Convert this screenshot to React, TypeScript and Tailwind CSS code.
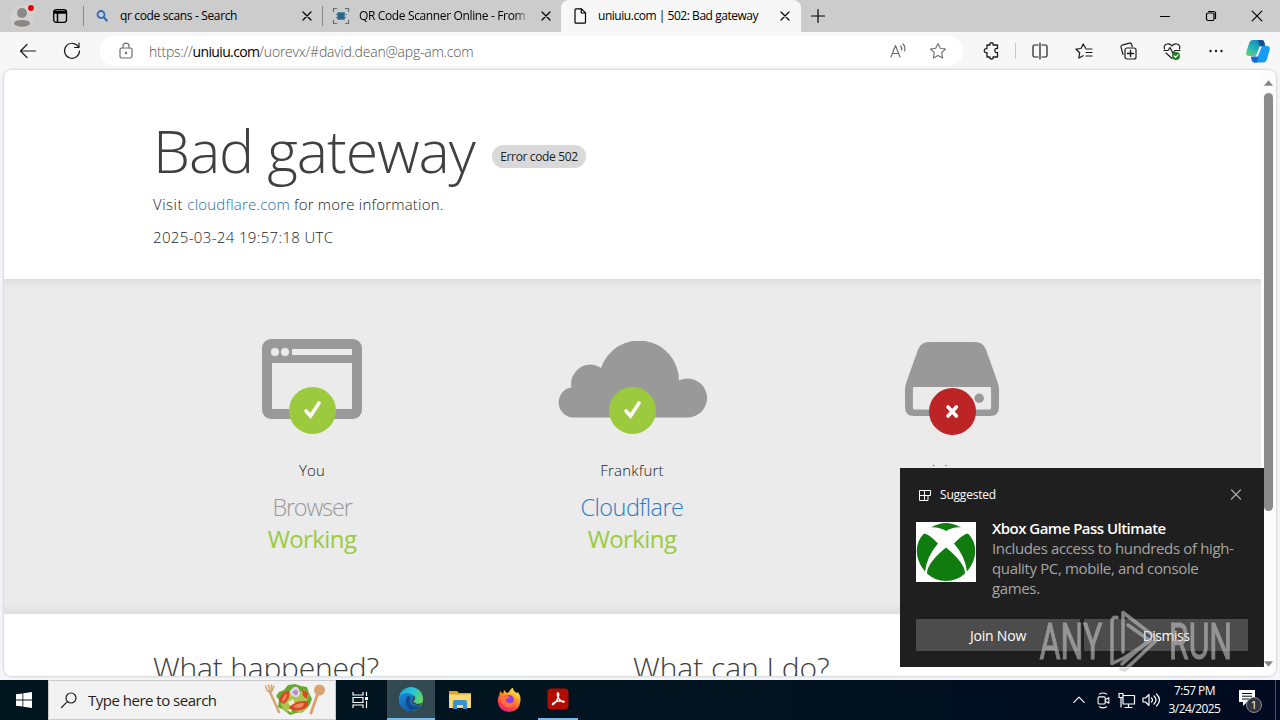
import type { ReactNode } from 'react'

type IconProps = { children: ReactNode; className?: string; size?: number }

function Icon({ children, className = '', size = 20 }: IconProps) {
  return (
    <svg width={size} height={size} viewBox="0 0 20 20" fill="none" stroke="currentColor" strokeWidth="1.2"
      strokeLinecap="round" strokeLinejoin="round" className={`shrink-0 ${className}`}>
      {children}
    </svg>
  )
}

function CloseIcon({ className = '' }: { className?: string }) {
  return <Icon className={className}><path d="M6 6l8 8M14 6l-8 8" strokeWidth="1.2" /></Icon>
}

function TabBar() {
  return (
    <div className="flex h-8 items-center bg-[#ccc] text-[12px] text-black">
      {/* profile */}
      <svg width="28" height="32" viewBox="0 0 28 32" className="ml-2 shrink-0">
        <circle cx="14" cy="17" r="12" fill="#d4d2d0" />
        <circle cx="14" cy="13" r="5" fill="#8b8987" />
        <path d="M6 23c0-4 16-4 16 0 0 5-16 5-16 0z" fill="#8b8987" />
        <circle cx="23" cy="8" r="4.5" fill="#dcd6d4" />
        <circle cx="23" cy="8" r="3" fill="#e3000f" />
      </svg>
      <Icon className="ml-[14px]">
        <rect x="3.700" y="3.700" width="12.800" height="12.600" rx="2.500" strokeWidth="1.300" />
        <path d="M4 5.500h12.300M4 7h12.300M7.500 7v9" strokeWidth="1.500" />
      </Icon>
      <div className="ml-[13px] h-5 w-px bg-[#888]" />
      <div className="flex w-[238px] items-center">
        <Icon className="ml-2 text-[#2f6db5]">
          <circle cx="9" cy="8.500" r="3.500" strokeWidth="1.800" />
          <path d="M11.700 11.300l3 3.300" strokeWidth="2.200" />
        </Icon>
        <span className="ml-[8px] w-[166px] whitespace-nowrap tracking-[-0.35px]">qr code scans - Search</span>
        <CloseIcon className="ml-[11px]" />
      </div>
      <div className="h-5 w-px bg-[#888]" />
      <div className="flex w-[238px] items-center">
        <svg width="18" height="18" viewBox="0 0 18 18" className="ml-[9px] shrink-0" fill="none" stroke="#56737d">
          <path d="M1.500 5V1.500H5M13 1.500h3.500V5M16.500 13v3.500H13M5 16.500H1.500V13" strokeWidth="1.200" />
          <path d="M5.500 5.500h7v7h-7z" fill="#2c6686" stroke="#4d8aa3" />
          <path d="M4 7.500h1M4 10.500h1M13 7.500h1.500M13 10.500h1" />
        </svg>
        <span className="ml-[9px] w-[171px] overflow-hidden whitespace-nowrap tracking-[-0.36px] [mask-image:linear-gradient(to_right,black_156px,transparent_171px)]">QR Code Scanner Online - From</span>
        <CloseIcon className="ml-[6px]" />
      </div>
      <div className="flex h-8 w-[240px] items-center rounded-t-lg bg-[#f7f7f7]">
        <Icon className="ml-[9px]">
          <path d="M6 2.800h5.500l4 4v9.400q0 1-1 1H6q-1 0-1-1V3.800q0-1 1-1z" />
          <path d="M11.300 3v4h4" />
        </Icon>
        <span className="ml-2 w-[167px] whitespace-nowrap tracking-[-0.46px]">uniuiu.com | 502: Bad gateway</span>
        <CloseIcon className="ml-[10px]" />
      </div>
      <Icon className="ml-[7px]"><path d="M10 3.500v13M3.500 10h13" /></Icon>
      <div className="ml-auto flex items-center gap-[26px] pr-[13px]">
        <Icon><path d="M5.500 10.500h9" /></Icon>
        <Icon>
          <rect x="5.500" y="7" width="7.500" height="7.500" rx="1.500" />
          <path d="M7.500 5.500h5q2 0 2 2v5" />
        </Icon>
        <Icon><path d="M5.200 5.200l9.600 9.600M14.800 5.200l-9.600 9.600" /></Icon>
      </div>
    </div>
  )
}

function CopilotLogo() {
  return (
    <svg width="26" height="26" viewBox="0 0 26 26" className="shrink-0">
      <defs>
        <linearGradient id="cpA" x1="0" y1="1" x2=".7" y2="0">
          <stop offset="0" stopColor="#74d267" /><stop offset=".5" stopColor="#20b7b9" /><stop offset="1" stopColor="#167db9" />
        </linearGradient>
        <linearGradient id="cpB" x1="0" y1="1" x2="1" y2="0">
          <stop offset="0" stopColor="#1596f2" /><stop offset="1" stopColor="#1a9df4" />
        </linearGradient>
      </defs>
      <path d="M8 2h8.500q2 0 2.600 2l1 3.500h-3q-2 0-2.700 2l-2 6q-.8 2.500-3 2.500H4q-3.500 0-2.700-4L4 5.500Q5 2 8 2z" fill="url(#cpA)" />
      <path d="M18 24.500H9.500q-2 0-2.600-2l-.7-3.500h3q2 0 2.700-2l2-6q.8-3 3-3H22q3.500 0 2.700 4L22 21q-1 3.500-4 3.500z" fill="url(#cpB)" />
      <path d="M13 2h4q1.700 0 2.200 2l1 4h-3L15 9z" fill="#174d91" />
      <path d="M6 18.500h4l3-1-.5 7h-3q-2 0-2.600-2z" fill="#1769cf" />
      <path d="M14.300 9.500q.7-1.500 2.500-1.500l-3.300 9q-.8 2-3 2z" fill="#fff" />
    </svg>
  )
}

function Toolbar() {
  return (
    <div className="flex h-[38px] items-center bg-[#f7f7f7] text-[#1c1c1c]">
      <Icon className="ml-[18px]"><path d="M2.500 10h15M9 3.500L2.500 10 9 16.500" /></Icon>
      <Icon className="ml-6"><path d="M16.500 6A7.500 7.500 0 1017.500 10M17 2v4.500h-4.500" /></Icon>
      <div className="ml-[18px] flex h-[30px] w-[863px] items-center rounded-full bg-white text-[#6e6e6e]">
        <Icon className="ml-4">
          <rect x="4" y="7" width="12" height="10" rx="1.700" />
          <path d="M7 7V5.200a3 3 0 016 0V7" />
          <circle cx="10" cy="12" r=".6" fill="currentColor" />
        </Icon>
        <span className="ml-[13px] w-[500px] whitespace-nowrap text-[14px] font-light tracking-[-0.22px] text-[#555]">
          https://<span className="font-normal tracking-[-0.65px] text-black">uniuiu.com</span>/uorevx/#david.dean@apg-am.com
        </span>
        <Icon className="ml-auto">
          <path d="M3 16L7.500 4.500 12 16M4.500 12.500h6M12.500 5q1.700 1.500 1 4M15 3q3 3 1.500 7" />
        </Icon>
        <Icon className="ml-5 mr-[15px]">
          <path d="M10 2.500l2.300 4.700 5.200.8-3.800 3.700.9 5.200L10 14.500l-4.600 2.400.9-5.200L2.500 8l5.200-.8z" strokeWidth="1.100" />
        </Icon>
      </div>
      <Icon className="ml-[19px]">
        <path d="M5 4h3q-.7-2.300 1.500-2.300T11 4h4.500v3.500q-2.700-.5-2.700 2t2.700 2V16H11q.7 2-1.500 2T8 16H5v-4.300q-2.700.3-2.700-2T5 7.700z" strokeWidth="1.300" />
      </Icon>
      <div className="ml-[13px] h-4 w-px bg-[#c8c8c8]" />
      <Icon className="ml-[14px]"><path d="M8 4H4.500q-1.500 0-1.500 1.500v9Q3 16 4.500 16H8M12 4h3.500Q17 4 17 5.500v9q0 1.500-1.500 1.500H12M10 2v16" /></Icon>
      <Icon className="ml-6"><path d="M11.500 7L9.200 3 7 7.500l-5 .7 3.700 3.600L4.800 17l4.400-2.300M12 8h6M12 11.500h6M12 15h6" /></Icon>
      <Icon className="ml-6">
        <path d="M5 13.500L3 6.200q-.4-1.500 1-2l7.500-2q1.500-.4 2 1l.7 2.300" />
        <rect x="7" y="7" width="11" height="11" rx="2" fill="#f7f7f7" />
        <path d="M12.500 9.500v6M9.500 12.500h6" strokeWidth="1.400" />
      </Icon>
      <Icon className="ml-6">
        <path d="M2.500 8Q1.300 3.500 5.500 3 8.500 2.700 10 5q1.500-2.300 4.500-2 4.200.5 3 5M2 9.500h4l2-3 3 6 2-3h5M4 12l6 5.500" />
        <circle cx="14" cy="15" r="4" fill="#1a811c" stroke="none" />
        <path d="M12.200 15l1.300 1.300 2.500-2.500" stroke="#fff" />
      </Icon>
      <Icon className="ml-6">
        <g fill="currentColor" stroke="none"><circle cx="4.500" cy="10" r="1.200" /><circle cx="10" cy="10" r="1.200" /><circle cx="15.500" cy="10" r="1.200" /></g>
      </Icon>
      <div className="ml-[19px]"><CopilotLogo /></div>
    </div>
  )
}

function StatusBadge({ ok }: { ok: boolean }) {
  return (
    <svg width="48" height="48" viewBox="0 0 48 48" className="absolute left-1/2 top-[48px] -ml-6">
      <circle cx="24.500" cy={ok ? 23.5 : 24.5} r="23.500" fill={ok ? '#9bca3e' : '#bd2426'} />
      {ok
        ? <path d="M18 24l4.500 5 8.500-13" fill="none" stroke="#fff" strokeWidth="3.600" strokeLinecap="round" strokeLinejoin="miter" />
        : <path d="M20 20l8.400 9M28.400 20l-8.400 9" stroke="#fff" strokeWidth="3.600" strokeLinecap="round" />}
    </svg>
  )
}

function BrowserDrawing() {
  return (
    <svg width="100" height="80" viewBox="0 0 100 80">
      <rect width="100" height="80" rx="9" fill="#999" />
      <path d="M10 24h80v46H10zM30 10h60v6H30z" fill="#ebebeb" />
      <circle cx="13" cy="13" r="4" fill="#ebebeb" />
      <circle cx="23" cy="13" r="4" fill="#ebebeb" />
    </svg>
  )
}

function CloudDrawing() {
  return (
    <svg width="152" height="78" viewBox="0 0 152 78">
      <path d="M15.500 76.500A15.300 15.300 0 0115.500 46.300A19 19 0 0145 27A40 40 0 01123 39.500A19.500 19.500 0 11131.500 76.500z" fill="#999" />
    </svg>
  )
}

function ServerDrawing() {
  return (
    <svg width="94" height="75" viewBox="0 0 95 76" preserveAspectRatio="none">
      <path d="M24 0h47q8 0 11 8l11 31q2 5 2 9v18q0 9-9 9H9q-9 0-9-9V48q0-4 2-9L13 8q3-8 11-8z" fill="#999" />
      <rect x="8" y="45.500" width="79" height="23" rx="1.500" fill="#ebebeb" />
      <circle cx="75" cy="57" r="4.800" fill="#999" />
    </svg>
  )
}

type ColumnProps = { drawing: ReactNode; ok: boolean; place: string; name?: string; nameColor?: string; status?: string }

function StatusColumn({ drawing, ok, place, name, nameColor = '', status }: ColumnProps) {
  return (
    <div className="flex w-[320px] flex-col items-center pt-[60px]">
      <div className="relative flex h-[96px] w-[152px] justify-center">
        {drawing}
        <StatusBadge ok={ok} />
      </div>
      <div className="mt-[24px] h-[22px] text-[15px] leading-[22px] font-light tracking-[0.2px] text-[#222]">{place}</div>
      {name && <div className={`mt-[11px] h-[31px] text-[23.5px] leading-[31px] font-light ${nameColor}`}>{name}</div>}
      {status && <div className="h-[31px] text-[24px] leading-[31px] tracking-[-0.6px] text-[#9bca3e]">{status}</div>}
    </div>
  )
}

function ErrorPage() {
  return (
    <div className="h-[606px] w-[1257px] overflow-hidden bg-white text-[#404040]">
      <div className="h-[209px] pl-[149px] pt-[49px]">
        <div className="flex h-[60px] items-center">
          <h1 className="mt-[2px] w-[339px] whitespace-nowrap text-[59px] leading-[60px] font-light tracking-[-1.1px]">Bad gateway</h1>
          <span className="mt-[15px] flex h-[23px] w-[94px] items-center justify-center rounded-full bg-[#d9d9d9] text-[12px] whitespace-nowrap text-[#222] tracking-[-0.35px]">Error code 502</span>
        </div>
        <p className="mt-[14px] text-[15px] leading-[22px] font-light tracking-[0.2px] text-[#222]">
          <span className="tracking-[0.5px]">Visit </span><span className="text-[#1d6bb0]">cloudflare.com</span> for more information.
        </p>
        <p className="mt-[11px] text-[15px] leading-[22px] font-light tracking-[0.35px] text-[#222]">2025-03-24 19:57:18 UTC</p>
      </div>

      <div className="flex h-[335px] bg-[linear-gradient(to_bottom,#dedede_0,#ebebeb_8px,#ebebeb_325px,#dedede_335px)] pl-[148px]">
        <StatusColumn drawing={<BrowserDrawing />} ok place="You" name="Browser" nameColor="text-[#999] tracking-[-1.2px]" status="Working" />
        <StatusColumn drawing={<div className="mt-[2px]"><CloudDrawing /></div>} ok place="Frankfurt" name="Cloudflare" nameColor="text-[#2f7bbf] tracking-[-0.55px]" status="Working" />
        <StatusColumn drawing={<div className="mt-[3px]"><ServerDrawing /></div>} ok={false} place="uniuiu.com" />
      </div>

      <div className="flex pl-[149px] pt-[34px] text-[30px] leading-[40px] font-light">
        <h2 className="w-[480px] tracking-[-0.2px]">What happened?</h2>
        <h2 className="tracking-[-0.05px]">What can I do?</h2>
      </div>
    </div>
  )
}

function ScrollBar() {
  return (
    <div className="flex w-[15px] flex-col items-center bg-[#fcfcfc]">
      <svg width="9" height="6" viewBox="0 0 10 6" className="mt-[10px]"><path d="M5 0l5 6H0z" fill="#858585" /></svg>
      <div className="mt-[7px] h-[418px] w-[9px] rounded-full bg-[#8b8b8b]" />
      <svg width="9" height="6" viewBox="0 0 10 6" className="mt-[150px]"><path d="M0 0h10L5 6z" fill="#858585" /></svg>
    </div>
  )
}

function XboxLogo() {
  return (
    <svg width="60" height="60" viewBox="0 0 60 60" className="shrink-0">
      <path d="M0 0h60v60H0z" fill="#fff" />
      <g fill="#107c10">
        <path d="M15 5.500Q30-3.500 45 5.500 38 4.500 30 9 22 4.500 15 5.500z" />
        <path d="M8 11.500Q-1.500 21 1.500 35 3.500 43 9 49.500 11 34 22 21.500 13 12 8 11.500z" />
        <path d="M52 11.500Q61.500 21 58.500 35 56.500 43 51 49.500 49 34 38 21.500 47 12 52 11.500z" />
        <path d="M30 25.500Q49 41 49 51.500 41 59 30 59 19 59 11 51.500 11 41 30 25.500z" />
      </g>
    </svg>
  )
}

function Toast() {
  return (
    <div className="absolute left-[900px] top-[468px] h-[199px] w-[364px] bg-[#1f1f1f] px-4 text-white">
      <div className="flex h-[54px] items-center text-[12px]">
        <svg width="12" height="12" viewBox="0 0 12 12" fill="none" stroke="#fff" className="ml-[3px]">
          <path d="M.5 1.500h5v10h-5zM.5 6.500h10M5.500 1.500h6v5h-6M5.500 11.500h3.500v-5" />
        </svg>
        <span className="ml-[9px] tracking-[-0.2px]">Suggested</span>
        <Icon className="ml-auto mr-[2px] text-[#aaa]"><path d="M5.500 5l9 9M14.500 5l-9 9" /></Icon>
      </div>
      <div className="flex h-[60px] gap-4">
        <XboxLogo />
        <div className="-mt-1 whitespace-nowrap text-[15px] leading-5 tracking-[-0.36px]">
          <div className="font-semibold tracking-[-0.53px]">Xbox Game Pass Ultimate</div>
          <div className="text-[#a5a5a5]">Includes access to hundreds of high-<br />quality PC, mobile, and console<br />games.</div>
        </div>
      </div>
      <div className="mt-[37px] flex gap-1 text-[14px]">
        <div className="flex h-8 w-[164px] items-center justify-center bg-[#4c4c4c] tracking-[-0.2px]">Join Now</div>
        <div className="flex h-8 w-[164px] items-center justify-center bg-[#4c4c4c] tracking-[-0.5px]">Dismiss</div>
      </div>
    </div>
  )
}

function Watermark() {
  return (
    <svg width="200" height="66" viewBox="0 0 200 66" className="absolute left-[1036px] top-[608px] opacity-60">
      <g fill="#c6c6c6" stroke="#c6c6c6" strokeWidth="1" fontFamily="Roboto, sans-serif" fontSize="50">
        <text x="3.500" y="51" textLength="63" lengthAdjust="spacingAndGlyphs">ANY</text>
        <text x="133" y="51" textLength="63" lengthAdjust="spacingAndGlyphs">RUN</text>
      </g>
      <g fill="none" stroke="#c6c6c6" strokeWidth="3.500" strokeLinejoin="round" strokeLinecap="round">
        <path d="M81 9.500q-5-1-5 4v42l12-5.500 27-17.500" />
        <path d="M87 44V4.500l32 24.500q3 2.500-1 5.500L89 62l-4-1" />
        <path d="M92 17l21 15-27 24" />
      </g>
    </svg>
  )
}

function EdgeLogo() {
  return (
    <svg width="26" height="26" viewBox="0 0 26 26">
      <defs>
        <linearGradient id="edgeTop" x1="0" y1="0" x2="1" y2=".5">
          <stop offset="0" stopColor="#1ba4dd" /><stop offset=".55" stopColor="#2ac6d2" /><stop offset="1" stopColor="#67d958" />
        </linearGradient>
        <linearGradient id="edgeLow" x1="0" y1="0" x2=".5" y2="1">
          <stop offset="0" stopColor="#1b8cdb" /><stop offset="1" stopColor="#1259a9" />
        </linearGradient>
      </defs>
      <circle cx="13" cy="13" r="12" fill="url(#edgeTop)" />
      <path d="M1 12C2 7 13 5 15 10q1 3-1 4.500c-1.500 2 2 4.500 5 4.500l4.500-.5Q19 25 13 25 1 25 1 12z" fill="url(#edgeLow)" />
      <path d="M10 10c-4 3-3 11 3 14 4 1 8-1 10-4-5 2-10 1-11-3-1-2 0-4 1-5q-1-2-3-2z" fill="#114a8b" />
      <path d="M14 14q2-2 1-5 3 1 2 4-.5 2-2 2.500l4 2.500 5-1-.5 1.500q-5 1.500-8-.5t-1.500-3.500z" fill="#344a52" />
    </svg>
  )
}

function FolderLogo() {
  return (
    <svg width="22" height="20" viewBox="0 0 22 20">
      <path d="M0 1h8l2 2h12v5H0z" fill="#e5a322" />
      <path d="M0 4.500h22V18H0z" fill="#fbd871" />
      <path d="M4 19v-7q0-2 2-2h10q2 0 2 2v7h-4v-4H8v4z" fill="#3a91d2" />
    </svg>
  )
}

function FirefoxLogo() {
  return (
    <svg width="24" height="25" viewBox="0 0 24 25">
      <defs>
        <linearGradient id="fox" x1=".8" y1="0" x2=".3" y2="1">
          <stop offset="0" stopColor="#fff44f" /><stop offset=".4" stopColor="#ff9a20" /><stop offset=".75" stopColor="#ff4144" /><stop offset="1" stopColor="#e31587" />
        </linearGradient>
      </defs>
      <path d="M2.500 7L3 3l3 3 1-4 3 3 2-1q2-4 4-4 0 3 4 5l1-1q3 4 2.500 9Q22 24 12 24T.7 13Q1 9 2.500 7z" fill="url(#fox)" />
      <circle cx="12" cy="12" r="5" fill="#8a3ee8" />
      <path d="M3 8q4-2 8 0l2 2q-4 0-4 2 0 3 4 3 4 0 4-4 2 8-5 8.500Q4 19 3 8z" fill="#ff7139" />
    </svg>
  )
}

function AcrobatLogo() {
  return (
    <svg width="22" height="22" viewBox="0 0 22 22">
      <rect x=".5" y=".5" width="21" height="21" rx="4" fill="#b30b00" />
      <path d="M10.500 5q2-.5.800 4-1.500 5-5 7.500-1.500.5-.5-1 2-2 6-2.500 5-.5 5.500.5-.5 1.500-3-.5-4-3-4-7 0-.8.200-1z" fill="none" stroke="#fff" strokeWidth="1.400" />
    </svg>
  )
}

function SaladDrawing() {
  return (
    <svg width="62" height="34" viewBox="0 0 62 34">
      <g fill="none" stroke="#d9a273" strokeLinecap="round">
        <path d="M6 9l9 20" strokeWidth="2.500" />
        <path d="M1.500 3l1.500 4q2 3 5 1l2-5M4.500 2L6 8M7.500 2v6" strokeWidth="1.500" />
        <path d="M54 10l-7 20" strokeWidth="3" />
      </g>
      <circle cx="55.500" cy="7" r="5.500" fill="#d9a273" />
      <path d="M15 9l5-2 4-5 7-1 6 2 6 1 2 6 3 6-3 7-6 6-7 1-6 2-6-5-6-3 1-7-3-4z" fill="#69a72f" />
      <path d="M18 15l8-7 6 4 8-6 5 6-3 8 2 5-7 5-8-3-8 2-4-7z" fill="#a9c84b" />
      <path d="M15 18q3-11 10-10 2 7-5 13zM25 25q2-8 19-7 1 7-7 9t-12-2zM38 6l6 4-1 6-4-3z" fill="#dc4628" />
      <path d="M18 17q2-6 5-6 0 4-4 8zM29 24q3-4 11-4 0 4-5 5z" fill="#f18a60" />
      <path d="M26 8q7-9 10 1 0 6-5 5t-5-6z" fill="#e4d7ee" />
      <path d="M28 9q5-5 6 0 0 4-3 3z" fill="#b291c7" />
      <path d="M24 19l5-3 2 4-5 3zM23 27l4-1 1 4z" fill="#f0ead0" />
    </svg>
  )
}

function Taskbar() {
  return (
    <div className="flex h-10 items-center bg-[linear-gradient(to_right,#00161f,#00131f_60%,#010a20)] text-white">
      <div className="flex w-12 justify-center">
        <svg width="16" height="16" viewBox="0 0 16 16" fill="#fff"><path d="M0 2.300l6.500-.9v6.200H0zM7.300 1.300L16 0v7.600H7.300zM0 8.400h6.500v6.200L0 13.700zM7.300 8.400H16V16l-8.700-1.300z" /></svg>
      </div>
      <div className="flex h-10 w-72 items-center border border-[#c9c9c9] bg-[#f2f2f2] text-[#222]">
        <Icon className="ml-[10px]"><circle cx="12" cy="8" r="5" /><path d="M8.300 11.700L2.500 17.500" /></Icon>
        <span className="ml-[9px] text-[15px] whitespace-nowrap tracking-[-0.5px]">Type here to search</span>
        <div className="ml-auto mr-[9px]"><SaladDrawing /></div>
      </div>
      <div className="flex w-[51px] justify-center">
        <svg width="18" height="18" viewBox="0 0 18 18" fill="none" stroke="#fff" className="-ml-1">
          <path d="M2 1v3h10V1M2 17v-3h10v3M2 6.500h10v5H2zM15.500 1v4M15.500 10v7" strokeWidth="1.200" />
          <path d="M14 6h3v3h-3z" fill="#fff" stroke="none" />
        </svg>
      </div>
      <div className="flex h-10 w-12 items-center justify-center border-b-2 border-[#76b9ed] bg-[#344a52]"><EdgeLogo /></div>
      <div className="flex h-10 w-[49px] items-center justify-center"><FolderLogo /></div>
      <div className="flex h-10 w-[49px] items-center justify-center"><FirefoxLogo /></div>
      <div className="ml-[5px] flex h-10 w-10 items-center justify-center border-b-2 border-[#76b9ed]"><AcrobatLogo /></div>

      {/* tray */}
      <div className="ml-auto flex items-center">
        <Icon size={16}><path d="M3.500 13L10 6.500l6.500 6.500" strokeWidth="1.500" /></Icon>
        <Icon className="ml-[7px]" size={18}>
          <rect x="4.500" y="6.500" width="8" height="8" rx="1.500" />
          <path d="M12.500 9.500l4-2v6l-4-2M6 3.500q4-2.500 8 0M6 17.500q4 2.500 8 0" />
        </Icon>
        <Icon className="ml-[5px]" size={20}>
          <path d="M6 5.500h11.500v8.500H6v-6M11.500 14v3.500M8 17.500h7M2 3.500h4v4H2zM4 7.500V17" />
        </Icon>
        <Icon className="ml-[4px]" size={20}>
          <path d="M2 8h2.500L8 4.500v11L4.500 12H2zM10.500 8q2 2 0 4M13 6q4 4 0 8M15.500 4q6 6 0 12" />
        </Icon>
        <div className="ml-[5px] w-[57px] text-center text-[12px] leading-[18px] whitespace-nowrap tracking-[-0.55px]">
          <div>7:57 PM</div>
          <div>3/24/2025</div>
        </div>
        <svg width="28" height="28" viewBox="0 0 28 28" className="ml-[13px]">
          <path d="M3 4h16v12H11l-4 4v-4H3z" fill="#fff" />
          <path d="M6 7.500h10M6 10.200h10M6 13h7" stroke="#01101f" />
          <circle cx="18" cy="19" r="7.500" fill="#303640" stroke="#8a8d93" />
          <text x="18" y="23" textAnchor="middle" fontSize="11" fill="#fff">1</text>
        </svg>
        <div className="ml-[11px] h-10 w-px bg-[#4a5260]" />
        <div className="w-1" />
      </div>
    </div>
  )
}

export default function App() {
  return (
    <div className="relative flex h-[720px] w-[1280px] flex-col overflow-hidden bg-[#f3f5f8] font-['Open_Sans','Noto_Sans',sans-serif]">
      <TabBar />
      <Toolbar />
      <div className="mx-[4px] mb-[4px] flex h-[606px] overflow-hidden rounded-lg bg-white shadow-[0_0_2px_1px_#d6d6d6]">
        <ErrorPage />
        <ScrollBar />
      </div>
      <Taskbar />
      <Toast />
      <Watermark />
    </div>
  )
}
